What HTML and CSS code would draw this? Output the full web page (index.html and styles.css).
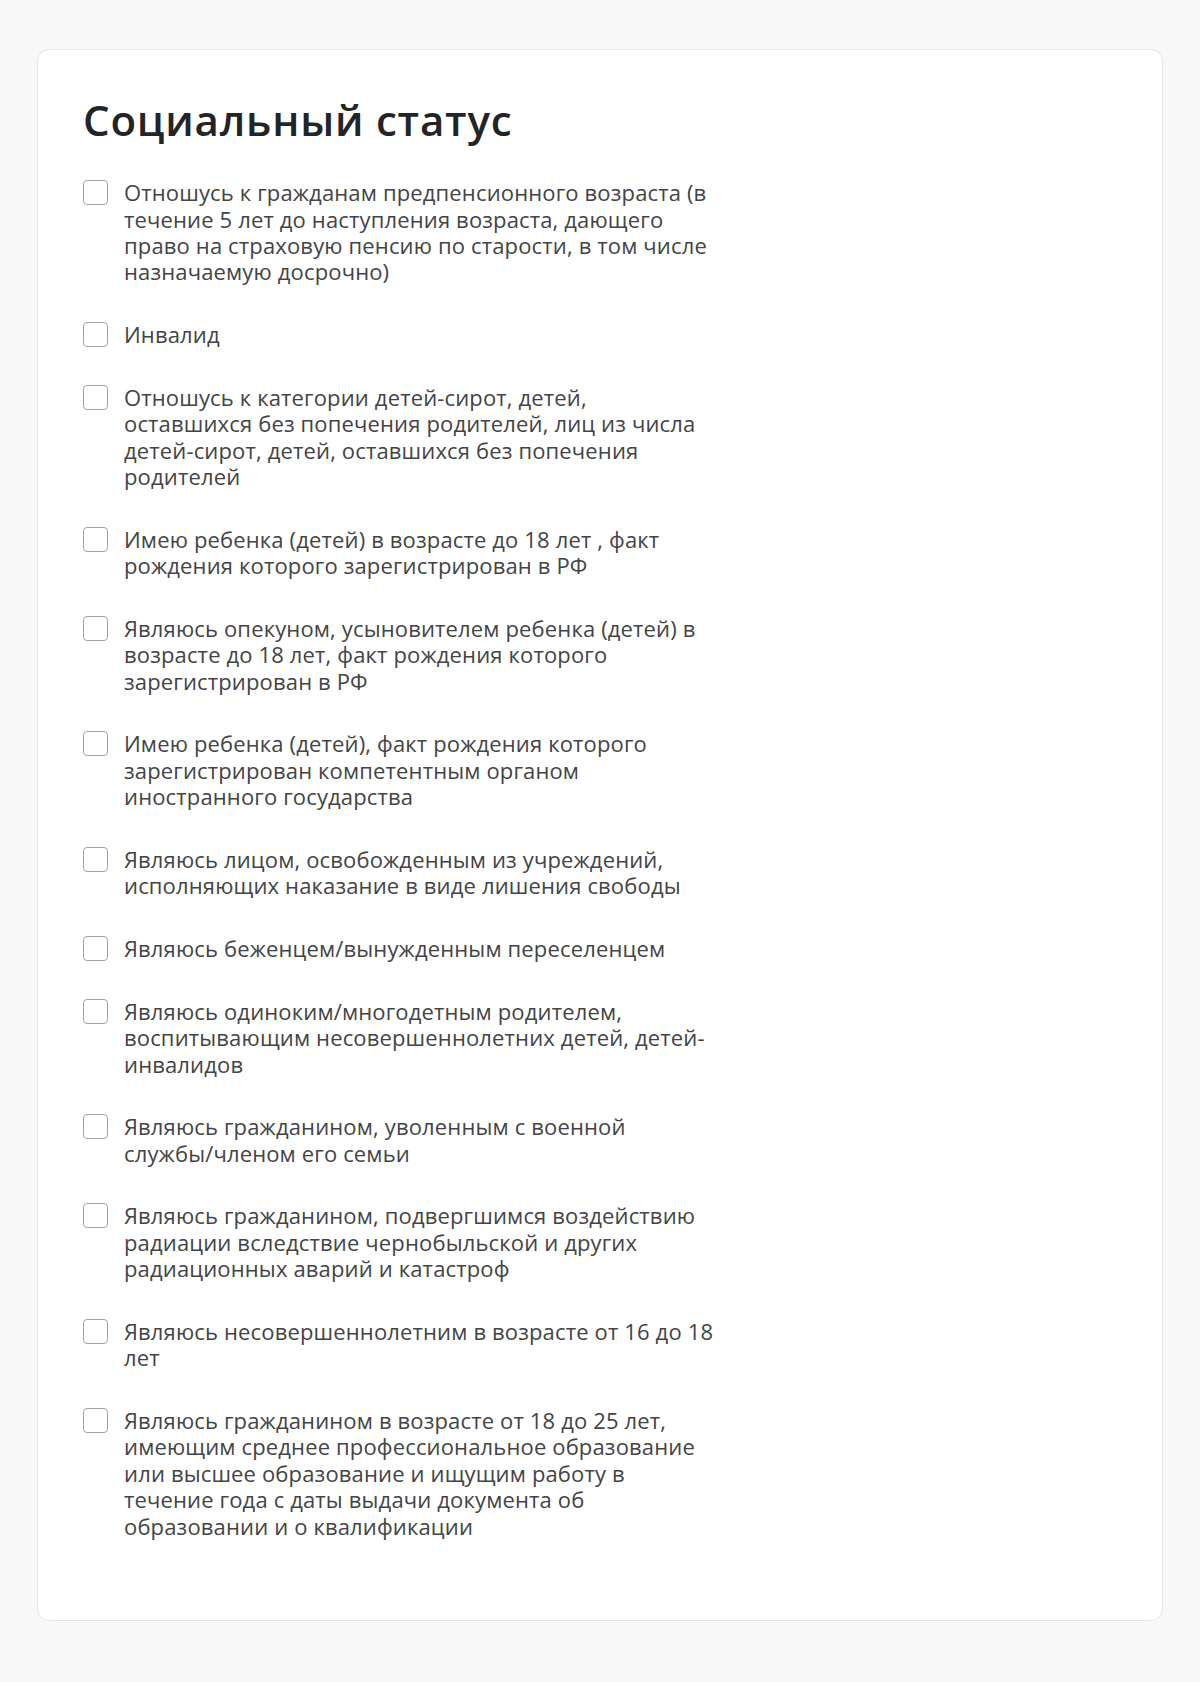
FILE: index.html
```html
<!DOCTYPE html>
<html lang="ru">
<head>
<meta charset="utf-8">
<title>Социальный статус</title>
<link rel="stylesheet" href="styles.css">
</head>
<body>
<main class="page">
  <section class="card">
    <h1 class="card-title">Социальный статус</h1>
    <ul class="options">
      <li class="option"><span class="box"></span><span class="label">Отношусь к гражданам предпенсионного возраста (в<br>течение 5 лет до наступления возраста, дающего<br>право на страховую пенсию по старости, в том числе<br>назначаемую досрочно)</span></li>
      <li class="option"><span class="box"></span><span class="label">Инвалид</span></li>
      <li class="option"><span class="box"></span><span class="label">Отношусь к категории детей-сирот, детей,<br>оставшихся без попечения родителей, лиц из числа<br>детей-сирот, детей, оставшихся без попечения<br>родителей</span></li>
      <li class="option"><span class="box"></span><span class="label">Имею ребенка (детей) в возрасте до 18 лет , факт<br>рождения которого зарегистрирован в РФ</span></li>
      <li class="option"><span class="box"></span><span class="label">Являюсь опекуном, усыновителем ребенка (детей) в<br>возрасте до 18 лет, факт рождения которого<br>зарегистрирован в РФ</span></li>
      <li class="option"><span class="box"></span><span class="label">Имею ребенка (детей), факт рождения которого<br>зарегистрирован компетентным органом<br>иностранного государства</span></li>
      <li class="option"><span class="box"></span><span class="label">Являюсь лицом, освобожденным из учреждений,<br>исполняющих наказание в виде лишения свободы</span></li>
      <li class="option"><span class="box"></span><span class="label">Являюсь беженцем/вынужденным переселенцем</span></li>
      <li class="option"><span class="box"></span><span class="label">Являюсь одиноким/многодетным родителем,<br>воспитывающим несовершеннолетних детей, детей-<br>инвалидов</span></li>
      <li class="option"><span class="box"></span><span class="label">Являюсь гражданином, уволенным с военной<br>службы/членом его семьи</span></li>
      <li class="option"><span class="box"></span><span class="label">Являюсь гражданином, подвергшимся воздействию<br>радиации вследствие чернобыльской и других<br>радиационных аварий и катастроф</span></li>
      <li class="option"><span class="box"></span><span class="label">Являюсь несовершеннолетним в возрасте от 16 до 18<br>лет</span></li>
      <li class="option"><span class="box"></span><span class="label">Являюсь гражданином в возрасте от 18 до 25 лет,<br>имеющим среднее профессиональное образование<br>или высшее образование и ищущим работу в<br>течение года с даты выдачи документа об<br>образовании и о квалификации</span></li>
    </ul>
  </section>
</main>
</body>
</html>
```

FILE: styles.css
```css
html, body {
  margin: 0;
  padding: 0;
}

body {
  background: #f8f8f8;
  font-family: "Open Sans", "Noto Sans", sans-serif;
  color: #434445;
}

.page {
  padding: 49px 37px 63px;
}

.card {
  background: #ffffff;
  border: 1px solid #e6e6e6;
  border-radius: 12px;
  padding: 45px 45px 81px;
}

.card-title {
  margin: 0 0 35px;
  font-size: 42px;
  line-height: 49.2px;
  font-weight: 600;
  color: #222426;
  letter-spacing: 0.8px;
}

.options {
  list-style: none;
  margin: 0;
  padding: 0;
  display: flex;
  flex-direction: column;
  gap: 36.3px;
}

.option {
  display: flex;
  align-items: flex-start;
  gap: 16px;
}

.box {
  flex: none;
  width: 25px;
  height: 25px;
  box-sizing: border-box;
  margin-top: 1px;
  border: 1.5px solid #a3a3a3;
  border-radius: 4px;
  background: #fff;
}

.label {
  font-size: 22px;
  line-height: 26.4px;
  letter-spacing: 0.15px;
  white-space: nowrap;
}
```
